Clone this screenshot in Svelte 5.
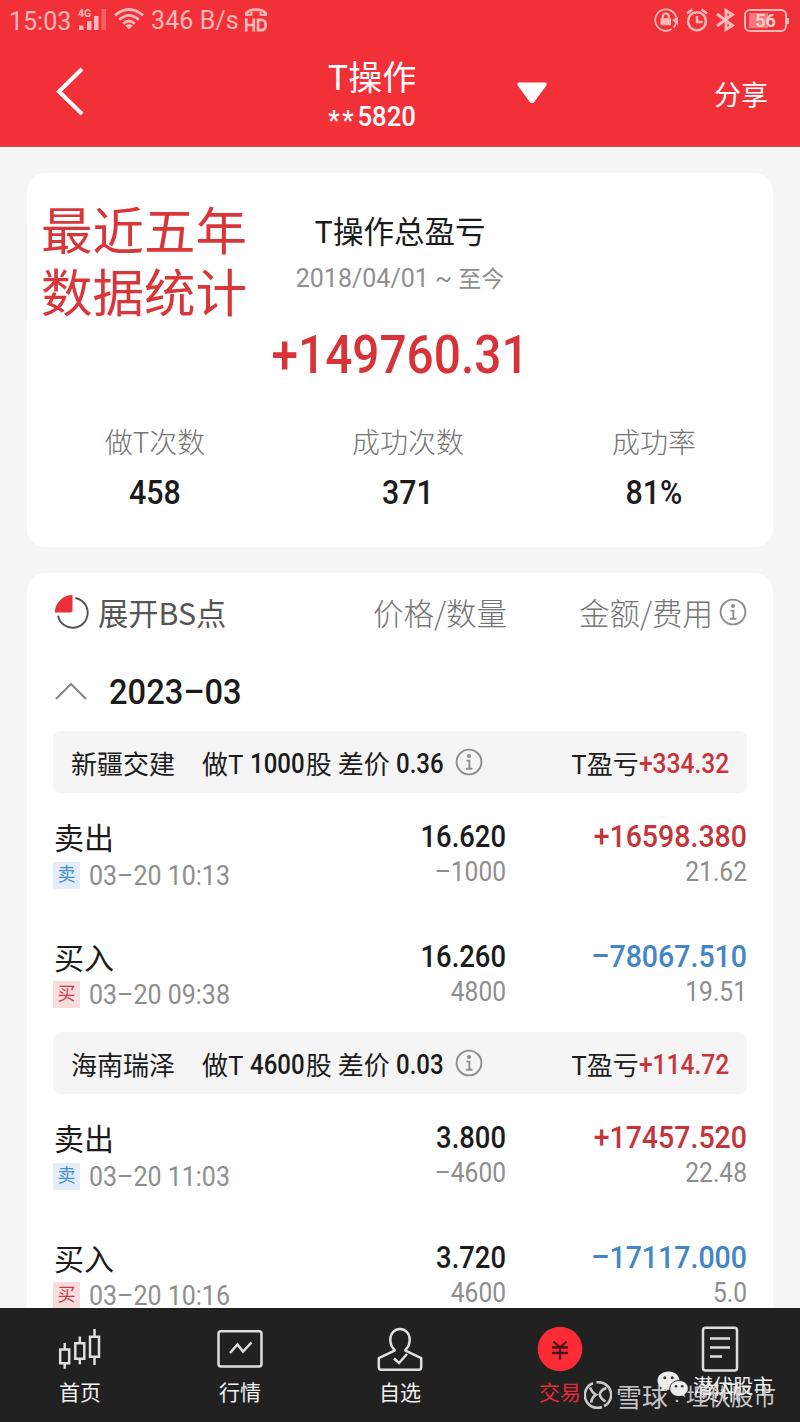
<script lang="ts">
    type Trade = {
        side: 'sell' | 'buy';
        time: string;
        price: string;
        amount: string;
        total: string;
        fee: string;
    };

    type Group = {
        name: string;
        shares: string;
        spread: string;
        profit: string;
        trades: Trade[];
    };

    const stats = [
        { label: '做T次数', value: '458' },
        { label: '成功次数', value: '371' },
        { label: '成功率', value: '81%' },
    ];

    const groups: Group[] = [
        {
            name: '新疆交建',
            shares: '1000',
            spread: '0.36',
            profit: '+334.32',
            trades: [
                { side: 'sell', time: '03–20 10:13', price: '16.620', amount: '–1000', total: '+16598.380', fee: '21.62' },
                { side: 'buy', time: '03–20 09:38', price: '16.260', amount: '4800', total: '–78067.510', fee: '19.51' },
            ],
        },
        {
            name: '海南瑞泽',
            shares: '4600',
            spread: '0.03',
            profit: '+114.72',
            trades: [
                { side: 'sell', time: '03–20 11:03', price: '3.800', amount: '–4600', total: '+17457.520', fee: '22.48' },
                { side: 'buy', time: '03–20 10:16', price: '3.720', amount: '4600', total: '–17117.000', fee: '5.0' },
            ],
        },
    ];

    const tabs = [
        { id: 'home', label: '首页' },
        { id: 'market', label: '行情' },
        { id: 'watch', label: '自选' },
        { id: 'trade', label: '交易' },
        { id: 'news', label: '资讯' },
    ];

    let activeTab = $state('trade');
    let expanded = $state(true);
</script>

{#snippet info()}
    <svg class="info" width="28" height="28" viewBox="0 0 28 28" fill="none" stroke="#8e8e8e">
        <circle cx="14" cy="14" r="12.4" stroke-width="1.9" />
        <circle cx="14" cy="8" r="2" fill="#8e8e8e" stroke="none" />
        <path d="M11.4 12.6h3v8M11 20.7h6.4" stroke-width="1.9" />
    </svg>
{/snippet}

<div class="app">
    <header>
        <div class="status">
            <span class="clock">15:03</span>
            <svg class="signal" width="29" height="24" viewBox="0 0 29 24" fill="#ffb9b8">
                <text x="0" y="9" font-size="10.5" font-weight="700">4G</text>
                <rect x="1" y="17.5" width="4.5" height="4.5" />
                <rect x="9" y="13" width="4.5" height="9" />
                <rect x="16" y="8" width="4.5" height="14" />
                <rect x="23.5" y="1" width="4.5" height="21" opacity=".35" />
            </svg>
            <svg class="wifi" width="30" height="22" viewBox="0 0 30 22" fill="none" stroke="#ffb9b8" stroke-width="2.8">
                <path d="M1 7.3Q15-4.2 29 7.3" />
                <path d="M5.2 11.8Q15 3 24.8 11.8" />
                <path d="M9.4 15.8Q15 10.4 20.6 15.8" />
                <path d="M11.2 17.6Q15 14.8 18.8 17.6L15 21.5z" fill="#ffb9b8" stroke="none" />
            </svg>
            <span class="speed">346 B/s</span>
            <svg class="volte" width="24" height="26" viewBox="0 0 24 26" fill="none" stroke="#ffb9b8">
                <path d="M2.3 9V6.5C5 1.2 19 1.2 21.7 6.5V9" stroke-width="2.8" />
                <path d="M1 7.8h6.5V5M23 7.8h-6.5V5" stroke-width="2" />
                <path d="M2.2 11.5v13M9.8 11.5v13M2.2 18h7.6M14 12.8v10.4h3q4.7 0 4.7-5.2t-4.7-5.2z" stroke-width="2.7" />
            </svg>
            <div class="status-right">
                <svg width="24" height="24" viewBox="0 0 24 24" fill="none" stroke="#ffb9b8" stroke-width="1.8">
                    <path d="M22.3 9.5A10.7 10.7 0 1 0 17.5 21.2M19.5 19.6A10.7 10.7 0 0 0 22 15.5" />
                    <path d="M18 12l6-3v8z" fill="#ffb9b8" stroke="none" />
                    <rect x="6.5" y="10.3" width="10.5" height="7" rx=".8" fill="#ffb9b8" stroke="none" />
                    <path d="M8.8 10.5V8.5a3 3 0 0 1 6 0v2" stroke-width="2.2" />
                </svg>
                <svg width="22" height="24" viewBox="0 0 22 24" fill="none" stroke="#ffb9b8" stroke-width="2.5">
                    <circle cx="11" cy="13.3" r="9" />
                    <path d="M11 8v6h5.5M1 5.4l5.3-4M21 5.4l-5.3-4" />
                </svg>
                <svg width="20" height="24" viewBox="0 0 20 24" fill="none" stroke="#ffb9b8" stroke-width="2.9">
                    <path d="M1 6l15.5 11.5L10 21.5v-19L16.5 6.5L1 18" />
                </svg>
                <div class="battery"><span>56</span></div>
            </div>
        </div>
        <div class="titlebar">
            <button class="back" aria-label="返回">
                <svg width="28" height="48" viewBox="0 0 28 48" fill="none" stroke="#fff" stroke-width="4">
                    <path d="M26 2L3 24.5L26 47" />
                </svg>
            </button>
            <div class="account">
                <div class="title">T操作</div>
                <div class="number"><i>**</i>5820</div>
            </div>
            <svg class="caret" width="30" height="22" viewBox="0 0 30 22" fill="#fff" stroke="#fff" stroke-width="2" stroke-linejoin="round">
                <path d="M1.5 1.5h27v1.3L16 20h-2L1.5 2.8z" />
            </svg>
            <button class="share">分享</button>
        </div>
    </header>

    <main>
        <section class="card summary">
            <div class="note">最近五年<br />数据统计</div>
            <h2>T操作总盈亏</h2>
            <div class="range">2018/04/01 ~ <em>至今</em></div>
            <div class="total">+149760.31</div>
            <div class="stats">
                {#each stats as stat}
                    <div class="stat">
                        <span class="stat-label">{stat.label}</span>
                        <span class="stat-value">{stat.value}</span>
                    </div>
                {/each}
            </div>
        </section>

        <section class="card records">
            <div class="columns">
                <div class="toggle">
                    <svg width="36" height="36" viewBox="0 0 36 36">
                        <path d="M18.5 1V16.5q0 2-2 2H.8A17.8 17.8 0 0 1 18.5 1z" fill="#e93137" />
                        <path d="M21.3 4A15 15 0 1 1 4 21.8" fill="none" stroke="#555" stroke-width="1.9" />
                    </svg>
                    <span>展开BS点</span>
                </div>
                <div class="col-price">价格/数量</div>
                <div class="col-total">金额/费用{@render info()}</div>
            </div>

            <button class="month" onclick={() => (expanded = !expanded)}>
                <svg width="34" height="20" viewBox="0 0 34 20" fill="none" stroke="#888" stroke-width="2.2">
                    <path d="M2 18L17 3L32 18" />
                </svg>
                <span>2023–03</span>
            </button>

            {#if expanded}
                {#each groups as group}
                    <div class="group-bar">
                        <span class="stock">{group.name}</span>
                        <span class="desc">做T <b>{group.shares}</b>股 差价 <b>{group.spread}</b></span>
                        {@render info()}
                        <span class="profit">T盈亏<b>{group.profit}</b></span>
                    </div>
                    {#each group.trades as trade}
                        <div class="trade {trade.side}">
                            <div class="what">
                                <div class="side">{trade.side === 'sell' ? '卖出' : '买入'}</div>
                                <div class="when">
                                    <span class="tag">{trade.side === 'sell' ? '卖' : '买'}</span>
                                    <span class="time">{trade.time}</span>
                                </div>
                            </div>
                            <div class="pair">
                                <div class="main">{trade.price}</div>
                                <div class="sub">{trade.amount}</div>
                            </div>
                            <div class="pair">
                                <div class="main money">{trade.total}</div>
                                <div class="sub">{trade.fee}</div>
                            </div>
                        </div>
                    {/each}
                {/each}
            {/if}
        </section>
    </main>

    <nav>
        {#each tabs as tab}
            <button class="tab" class:active={activeTab === tab.id} onclick={() => (activeTab = tab.id)}>
                <svg width="48" height="48" viewBox="0 0 48 48" fill="none" stroke="#dedede" stroke-width="2.5">
                    {#if tab.id === 'home'}
                        <path d="M4.2 24.5h9v13.7h-9zM8.7 18v6.5M8.7 38.2v5.5M19.3 18.2h9v15.5h-9zM23.8 11.5v6.7M23.8 33.7v5.5M34 11.7h9v20h-9zM38.5 4v7.7M38.5 31.7v8.3" />
                    {:else if tab.id === 'market'}
                        <rect x="2.5" y="6.2" width="43" height="35.3" rx="2.5" />
                        <path d="M14 28l7.5-8.5 5.5 7 8.5-9" />
                    {:else if tab.id === 'watch'}
                        <path d="M18.5 24.7C15.5 22 14.3 18.5 14.3 14.7C14.3 8.5 18.5 4 24 4s9.7 4.5 9.7 10.7c0 3.8-1.2 7.3-4.2 10v1l15.7 7.5v9q0 2.5-2.5 2.5H5.3q-2.5 0-2.5-2.5v-9l15.7-7.5z" stroke-linejoin="round" />
                        <path d="M18 33.5l5 4.5 8-9" />
                    {:else if tab.id === 'trade'}
                        <circle cx="24" cy="24" r="22.3" fill="#fc2b35" stroke="none" />
                        <path d="M17.5 16.5l6.5 6 6.5-6M16 22.5h16M16 28h16M24 22.5v12.2" stroke="#4a1318" stroke-width="2.3" />
                    {:else}
                        <rect x="7" y="2.7" width="34" height="42.8" rx="2.5" />
                        <path d="M14 13.5h20M14 22.5h20M14 31.5h12" />
                    {/if}
                </svg>
                <span>{tab.label}</span>
            </button>
        {/each}
    </nav>

    <div class="mark xueqiu">
        <svg width="28" height="28" viewBox="0 0 28 28" fill="none" stroke="#c9c9c9" stroke-width="2.6">
            <path d="M9 2.3A12.6 12.6 0 1 0 18 26M12.5 1.4A12.6 12.6 0 0 1 20 25.2" />
            <path d="M6 6.5q2.5 5.5 6 7.2q-4.5 3-4.8 8M22.5 7q-6 2-6.8 6.5q.8 4 5.8 7" />
        </svg>
        <span class="site">雪球</span>
        <span class="colon">:</span>
        <span class="author">埋伏股市</span>
    </div>
    <div class="mark wechat">
        <svg width="32" height="28" viewBox="0 0 32 28">
            <path d="M11.5.5C5.2.5.5 4.5.5 9.5c0 3 1.6 5.5 4.2 7.2L3.6 20.5l4-2.2c1.3.4 2.6.5 3.9.5 6.2 0 11-4 11-9.2S17.7.5 11.5.5z" fill="#ececec" />
            <circle cx="7.8" cy="6.8" r="1.5" fill="#333" />
            <circle cx="15.2" cy="6.8" r="1.5" fill="#333" />
            <path d="M22 9.5c-5.2 0-9.2 3.5-9.2 8s4 8 9.2 8c1.2 0 2.3-.2 3.3-.5l3.4 1.8-.9-3.2c2.2-1.5 3.5-3.6 3.5-6.1 0-4.5-4-8-9.3-8z" fill="#ececec" stroke="#212121" stroke-width=".9" />
            <circle cx="19" cy="15.2" r="1.3" fill="#333" />
            <circle cx="25.2" cy="15.2" r="1.3" fill="#333" />
        </svg>
        <span>潜伏股市</span>
    </div>
</div>

<style>
    :global(body) {
        margin: 0;
        background: #f5f5f5;
    }

    .app {
        position: relative;
        display: flex;
        flex-direction: column;
        height: 1422px;
        overflow: hidden;
        font-family: Roboto, "Noto Sans CJK SC", sans-serif;
        color: #1b1b1b;
    }

    svg {
        display: block;
        flex: none;
    }

    button {
        padding: 0;
        border: 0;
        background: none;
        font: inherit;
        color: inherit;
        cursor: pointer;
    }

    header {
        flex: none;
        height: 146px;
        border-bottom: 1px solid #b8535a;
        background: #f23038;
        color: #fff;
    }

    .status {
        display: flex;
        align-items: center;
        height: 40px;
        padding: 0 11px 0 9px;
        color: #ffb9b8;
        font-size: 25px;
    }

    .clock {
        width: 69px;
        padding-top: 2px;
    }

    .wifi {
        margin: 0 7px 2px;
    }

    .speed {
        width: 87px;
        font-size: 25px;
        letter-spacing: 0.1px;
        white-space: nowrap;
    }

    .volte {
        margin-left: 6px;
    }

    .status-right {
        display: flex;
        align-items: center;
        gap: 8px;
        margin-left: auto;
    }

    .battery {
        position: relative;
        box-sizing: border-box;
        width: 43px;
        height: 23px;
        margin-right: 2px;
        border: 2px solid #ffb9b8;
        border-radius: 6px;
        background: linear-gradient(90deg, #f8797c 19px, transparent 19px) 3px 2px / 34px 15px no-repeat;
        color: #ffcfce;
        font-size: 18px;
        font-weight: 700;
        line-height: 20px;
        text-align: center;
    }

    .battery::after {
        content: "";
        position: absolute;
        top: 7px;
        right: -4px;
        width: 2px;
        height: 6px;
        background: #ffb9b8;
    }

    .titlebar {
        display: grid;
        grid-template-columns: 300px 144px 1fr auto;
        height: 106px;
        padding: 0 32px 0 56px;
    }

    .back {
        padding-top: 27px;
        justify-self: start;
        align-self: start;
    }

    .account {
        width: 200px;
        justify-self: center;
        margin-left: -112px;
        text-align: center;
    }

    .title {
        padding-top: 14px;
        font-family: "Noto Sans CJK SC", sans-serif;
        font-size: 34px;
        line-height: 44px;
    }

    .number {
        margin-top: 2px;
        font-size: 27px;
        font-weight: 500;
        line-height: 34px;
        transform: scaleX(0.95);
    }

    .number i {
        margin-right: 1px;
        font-style: normal;
        letter-spacing: 3px;
        vertical-align: -4px;
        line-height: 1;
    }

    .caret {
        margin: 42px 0 0 17px;
    }

    .share {
        align-self: start;
        padding-top: 36px;
        font-size: 27px;
        line-height: 40px;
    }

    main {
        flex: 1;
        min-height: 0;
        padding: 26px 27px 0;
        overflow: hidden;
    }

    .card {
        box-sizing: border-box;
        border-radius: 18px;
        background: #fff;
    }

    .summary {
        position: relative;
        height: 374px;
        margin-bottom: 26px;
        padding-top: 35px;
        text-align: center;
    }

    .note {
        position: absolute;
        top: 24px;
        left: 14px;
        color: #d9363a;
        font-family: "Noto Sans CJK SC", sans-serif;
        font-size: 51.5px;
        line-height: 62px;
    }

    h2 {
        margin: 0;
        font-family: "Noto Sans CJK SC", sans-serif;
        font-size: 30.5px;
        font-weight: 400;
        line-height: 44px;
    }

    .range {
        margin-top: 9px;
        color: #8f8f8f;
        font-size: 25px;
        line-height: 36px;
    }

    .range em {
        font-size: 23px;
        font-style: normal;
    }

    /* figures are set slightly condensed throughout */
    .total {
        margin-top: 27px;
        color: #d73338;
        font-size: 54px;
        font-weight: 500;
        line-height: 60px;
        transform: scaleX(0.885);
    }

    .stats {
        display: grid;
        grid-template-columns: 256px 250px 242px;
        margin-top: 36px;
    }

    .stat {
        display: flex;
        flex-direction: column;
    }

    .stat-label {
        color: #757575;
        font-family: "Noto Sans CJK SC", sans-serif;
        font-size: 28px;
        font-weight: 300;
        line-height: 40px;
    }

    .stat-value {
        margin-top: 12px;
        font-size: 33px;
        font-weight: 500;
        line-height: 40px;
        transform: scaleX(0.92);
    }

    .records {
        height: 900px;
        padding: 0 26px 0 27px;
    }

    .columns {
        display: grid;
        grid-template-columns: 200px 253px 240px;
        align-items: center;
        height: 78px;
        color: #757575;
        font-family: "Noto Sans CJK SC", sans-serif;
        font-size: 30.5px;
        font-weight: 300;
        white-space: nowrap;
    }

    .toggle {
        display: flex;
        align-items: center;
        gap: 8px;
        color: #555;
        font-size: 30.3px;
        font-weight: 400;
    }

    .col-price {
        text-align: right;
    }

    .col-total {
        display: flex;
        align-items: center;
        justify-content: flex-end;
        gap: 6px;
    }

    .month {
        display: flex;
        align-items: center;
        gap: 21px;
        height: 80px;
        font-size: 35px;
        font-weight: 500;
    }

    .month span {
        padding-top: 3px;
        transform: scaleX(0.935);
        transform-origin: left;
    }

    .group-bar {
        display: flex;
        align-items: center;
        height: 62px;
        padding: 0 18px;
        margin-left: -1px;
        border-radius: 8px;
        background: #f5f5f5;
        font-family: "Noto Sans CJK SC", sans-serif;
        font-size: 26px;
        white-space: nowrap;
    }

    .group-bar b {
        position: relative;
        top: -1px;
        display: inline-block;
        margin-right: -6px;
        font-family: Roboto, sans-serif;
        font-size: 27px;
        font-weight: 500;
        line-height: 30px;
        transform: scaleX(0.89);
        transform-origin: left;
    }

    .desc {
        margin: 0 11px 0 27px;
    }

    .desc b {
        margin-left: 1px;
    }

    .profit {
        margin-left: auto;
    }

    .group-bar .profit b {
        margin: 0 0 0 -9px;
        color: #c9343b;
        transform: scaleX(0.91);
        transform-origin: right;
    }

    .trade {
        display: grid;
        grid-template-columns: 200px 252px 1fr;
        height: 119.5px;
    }

    .side {
        padding-top: 25px;
        font-size: 30px;
        line-height: 41px;
    }

    .when {
        display: flex;
        align-items: center;
        gap: 9px;
        height: 32px;
        margin-left: -1px;
        color: #8e8e8e;
        font-size: 27px;
        white-space: nowrap;
    }

    .time {
        padding-top: 1px;
        transform: scaleX(0.925);
        transform-origin: left;
    }

    .tag {
        width: 27px;
        height: 27px;
        background: #e3edf8;
        color: #4a8fcc;
        font-size: 18px;
        line-height: 26px;
        text-align: center;
    }

    .buy .tag {
        background: #f9dcdd;
        color: #c83a42;
    }

    .pair {
        padding-top: 25px;
        text-align: right;
    }

    .main {
        font-size: 31.5px;
        font-weight: 500;
        line-height: 38px;
        transform: scaleX(0.87);
        transform-origin: right;
    }

    .main.money {
        transform: scaleX(0.905);
    }

    .sub {
        color: #8e8e8e;
        font-size: 27px;
        line-height: 32px;
        transform: scaleX(0.91);
        transform-origin: right;
    }

    .sell .money {
        color: #c4353b;
    }

    .buy .money {
        color: #4386c8;
    }

    nav {
        display: flex;
        flex: none;
        height: 114px;
        background: #212121;
    }

    .tab {
        display: flex;
        flex: 1;
        flex-direction: column;
        align-items: center;
        padding-top: 17px;
        color: #f2f2f2;
        font-size: 21px;
        line-height: 30px;
    }

    .tab span {
        margin-top: 5px;
    }

    .tab.active {
        color: #e72b38;
    }

    .mark {
        position: absolute;
        display: flex;
        align-items: center;
        white-space: nowrap;
    }

    .xueqiu {
        top: 1377px;
        left: 584px;
        height: 36px;
        color: #c6c6c6;
        font-size: 26px;
    }

    .site {
        margin-left: 4px;
    }

    .colon {
        width: 18px;
        font-size: 20px;
        text-align: center;
    }

    .author {
        font-size: 22.5px;
    }

    .wechat {
        top: 1371px;
        left: 657px;
        height: 28px;
        color: #f0f0f0;
        font-size: 20px;
    }

    .wechat span {
        margin-left: 4px;
    }
</style>
